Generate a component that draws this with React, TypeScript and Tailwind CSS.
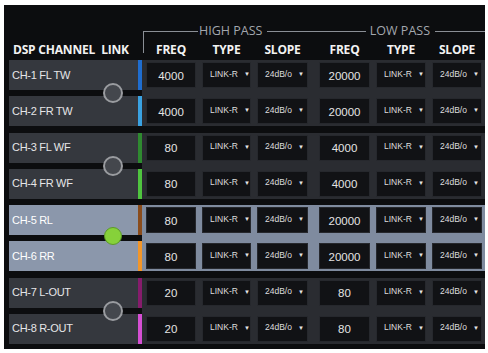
import React from 'react';

type Row = { name: string; bar: string; hf: string; lf: string };
type Group = { sel: boolean; rows: Row[] };

const groups: Group[] = [
  {
    sel: false,
    rows: [
      { name: 'CH-1 FL TW', bar: 'bg-[#1f6dcf]', hf: '4000', lf: '20000' },
      { name: 'CH-2 FR TW', bar: 'bg-[#3aa2e2]', hf: '4000', lf: '20000' },
    ],
  },
  {
    sel: false,
    rows: [
      { name: 'CH-3 FL WF', bar: 'bg-[#2f8a30]', hf: '80', lf: '4000' },
      { name: 'CH-4 FR WF', bar: 'bg-[#4fc43f]', hf: '80', lf: '4000' },
    ],
  },
  {
    sel: true,
    rows: [
      { name: 'CH-5 RL', bar: 'bg-[#8a4c1c]', hf: '80', lf: '20000' },
      { name: 'CH-6 RR', bar: 'bg-[#f2962a]', hf: '80', lf: '20000' },
    ],
  },
  {
    sel: false,
    rows: [
      { name: 'CH-7 L-OUT', bar: 'bg-[#861c6c]', hf: '20', lf: '80' },
      { name: 'CH-8 R-OUT', bar: 'bg-[#d54fd3]', hf: '20', lf: '80' },
    ],
  },
];

const font = "font-['Liberation_Sans',Arial,sans-serif]";

function Arrow() {
  return <span className="text-[6px] leading-none text-[#e6e6e6]">▼</span>;
}

function FreqBox({ v, w }: { v: string; w: string }) {
  return (
    <div
      className={`${w} h-full flex items-center justify-center pt-[3px] bg-[#111215] border border-[#26282d] text-[11.5px] text-[#e4e4e4] ${font}`}
    >
      {v}
    </div>
  );
}

function SelBox({ v, w, size }: { v: string; w: string; size: string }) {
  return (
    <div
      className={`${w} h-full flex items-center pl-[7px] gap-[6px] pb-[2px] bg-[#111215] border border-[#26282d] ${size} text-[#dedede] ${font}`}
    >
      <span>{v}</span>
      <Arrow />
    </div>
  );
}

function BoxRow({ r }: { r: Row }) {
  return (
    <div className="flex h-[26px]">
      <FreqBox v={r.hf} w="w-[50px]" />
      <div className="ml-[6px]">
        <SelBox v="LINK-R" w="w-[49px]" size="text-[8.5px]" />
      </div>
      <div className="ml-[6px]">
        <SelBox v="24dB/o" w="w-[51px]" size="text-[8.5px]" />
      </div>
      <div className="ml-[11px]">
        <FreqBox v={r.lf} w="w-[51px]" />
      </div>
      <div className="ml-[6px]">
        <SelBox v="LINK-R" w="w-[50px]" size="text-[8.5px]" />
      </div>
      <div className="ml-[6px]">
        <SelBox v="24dB/o" w="w-[50px]" size="text-[8.5px]" />
      </div>
    </div>
  );
}

function GroupBlock({ g }: { g: Group }) {
  const nameBg = g.sel ? 'bg-[#8b97ab]' : 'bg-[#35383e]';
  const strip = g.sel ? 'bg-[#7f8b9f]' : 'bg-[#2a2c31]';
  const nameText = g.sel ? 'text-[#ffffff]' : 'text-[#e6e6e8]';
  return (
    <div className="relative flex h-[66px]">
      <div className="flex flex-col gap-[6px] w-[133px]">
        {g.rows.map((r) => (
          <div key={r.name} className="flex h-[30px]">
            <div
              className={`w-[129px] flex items-center pl-[3px] text-[11px] tracking-[-0.3px] ${nameBg} ${nameText} ${font}`}
            >
              {r.name}
            </div>
            <div className={`w-[4px] ${r.bar}`} />
          </div>
        ))}
      </div>
      <div className={`flex-1 flex flex-col justify-between py-[2px] pl-[4px] pr-[3px] ${strip}`}>
        {g.rows.map((r) => (
          <BoxRow key={r.name} r={r} />
        ))}
      </div>
      {g.sel ? (
        <div className="absolute left-[95px] top-[22px] w-[18px] h-[18px] rounded-full bg-[#86d13a] border border-[#5c9a28]" />
      ) : (
        <div className="absolute left-[94px] top-[23px] w-[20px] h-[20px] rounded-full bg-[#44474d] border-[2.5px] border-[#9a9ca0]" />
      )}
    </div>
  );
}

export default function App() {
  const hdr = "font-['Open_Sans',sans-serif] font-bold text-[12px] text-[#f2f2f2] tracking-[-0.2px]";
  return (
    <div className="w-[488px] h-[353px] bg-white pt-[5px] pl-[4px] pr-[3px] pb-[4px]">
      <div className="w-full h-full bg-[#0c0d0f] pl-[5px] flex flex-col">
        <div className="h-[55px] flex flex-col">
          <div className="mt-[18px] h-[16px] flex items-center ml-[134px] font-['Open_Sans',sans-serif] text-[12.5px] text-[#a3a7ae]">
            <div className="self-start mt-[8px] w-[55px] h-[22px] border-l border-t border-[#8a8e95]" />
            <span className="ml-[1px] leading-none">HIGH PASS</span>
            <div className="ml-[5px] mr-[4px] flex-1 h-px bg-[#8a8e95]" />
            <span className="leading-none">LOW PASS</span>
            <div className="ml-[5px] w-[50px] h-px bg-[#8a8e95]" />
          </div>
          <div className="mt-[3px] h-[15px] flex items-center">
            <span className={`w-[87px] pl-[4px] whitespace-nowrap ${hdr}`}>DSP CHANNEL</span>
            <span className={`w-[38px] text-center ${hdr}`}>LINK</span>
            <div className="w-[12px]" />
            <span className={`w-[50px] text-center ${hdr}`}>FREQ</span>
            <span className={`ml-[6px] w-[49px] text-center ${hdr}`}>TYPE</span>
            <span className={`ml-[6px] w-[51px] text-center ${hdr}`}>SLOPE</span>
            <span className={`ml-[11px] w-[51px] text-center ${hdr}`}>FREQ</span>
            <span className={`ml-[6px] w-[50px] text-center ${hdr}`}>TYPE</span>
            <span className={`ml-[6px] w-[50px] text-center ${hdr}`}>SLOPE</span>
          </div>
        </div>
        <div className="flex flex-col gap-[6.5px]">
          {groups.map((g, i) => (
            <GroupBlock key={i} g={g} />
          ))}
        </div>
      </div>
    </div>
  );
}
